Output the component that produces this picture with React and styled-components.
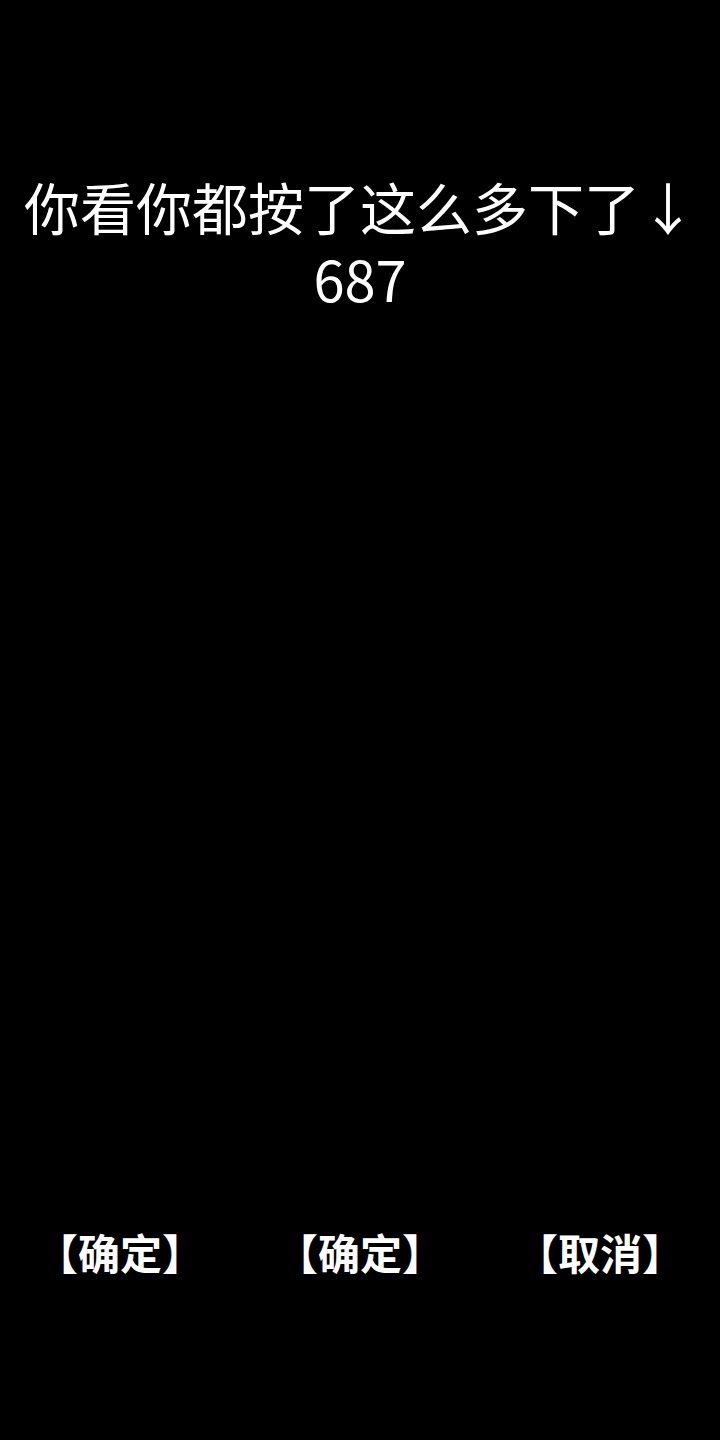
import styled, { createGlobalStyle } from 'styled-components';

const GlobalStyle = createGlobalStyle`
  html, body {
    margin: 0;
    padding: 0;
    background: #000;
  }
  body {
    font-family: "Noto Sans CJK SC", "Noto Sans", sans-serif;
    color: #fff;
  }
`;

const Page = styled.div`
  width: 100%;
  height: 1440px;
  background: #000;
  display: flex;
  flex-direction: column;
  align-items: center;
`;

const Title = styled.div`
  margin-top: 170px;
  font-size: 56px;
  line-height: 72px;
  text-align: center;
  color: #fff;
  white-space: nowrap;
`;

const ButtonRow = styled.div`
  margin-top: auto;
  margin-bottom: 158px;
  width: 100%;
  display: grid;
  grid-template-columns: repeat(3, 1fr);
`;

const ActionButton = styled.button`
  height: 60px;
  border: none;
  background: transparent;
  padding: 0;
  color: #fff;
  font-family: "Noto Sans CJK SC", sans-serif;
  font-size: 42px;
  font-weight: 700;
  line-height: 60px;
  text-align: center;
  cursor: pointer;
`;

const App = () => {
  const count = 687;
  return (
    <>
      <GlobalStyle />
      <Page>
        <Title>
          你看你都按了这么多下了↓
          <br />
          {count}
        </Title>
        <ButtonRow>
          <ActionButton>【确定】</ActionButton>
          <ActionButton>【确定】</ActionButton>
          <ActionButton>【取消】</ActionButton>
        </ButtonRow>
      </Page>
    </>
  );
};

export default App;
